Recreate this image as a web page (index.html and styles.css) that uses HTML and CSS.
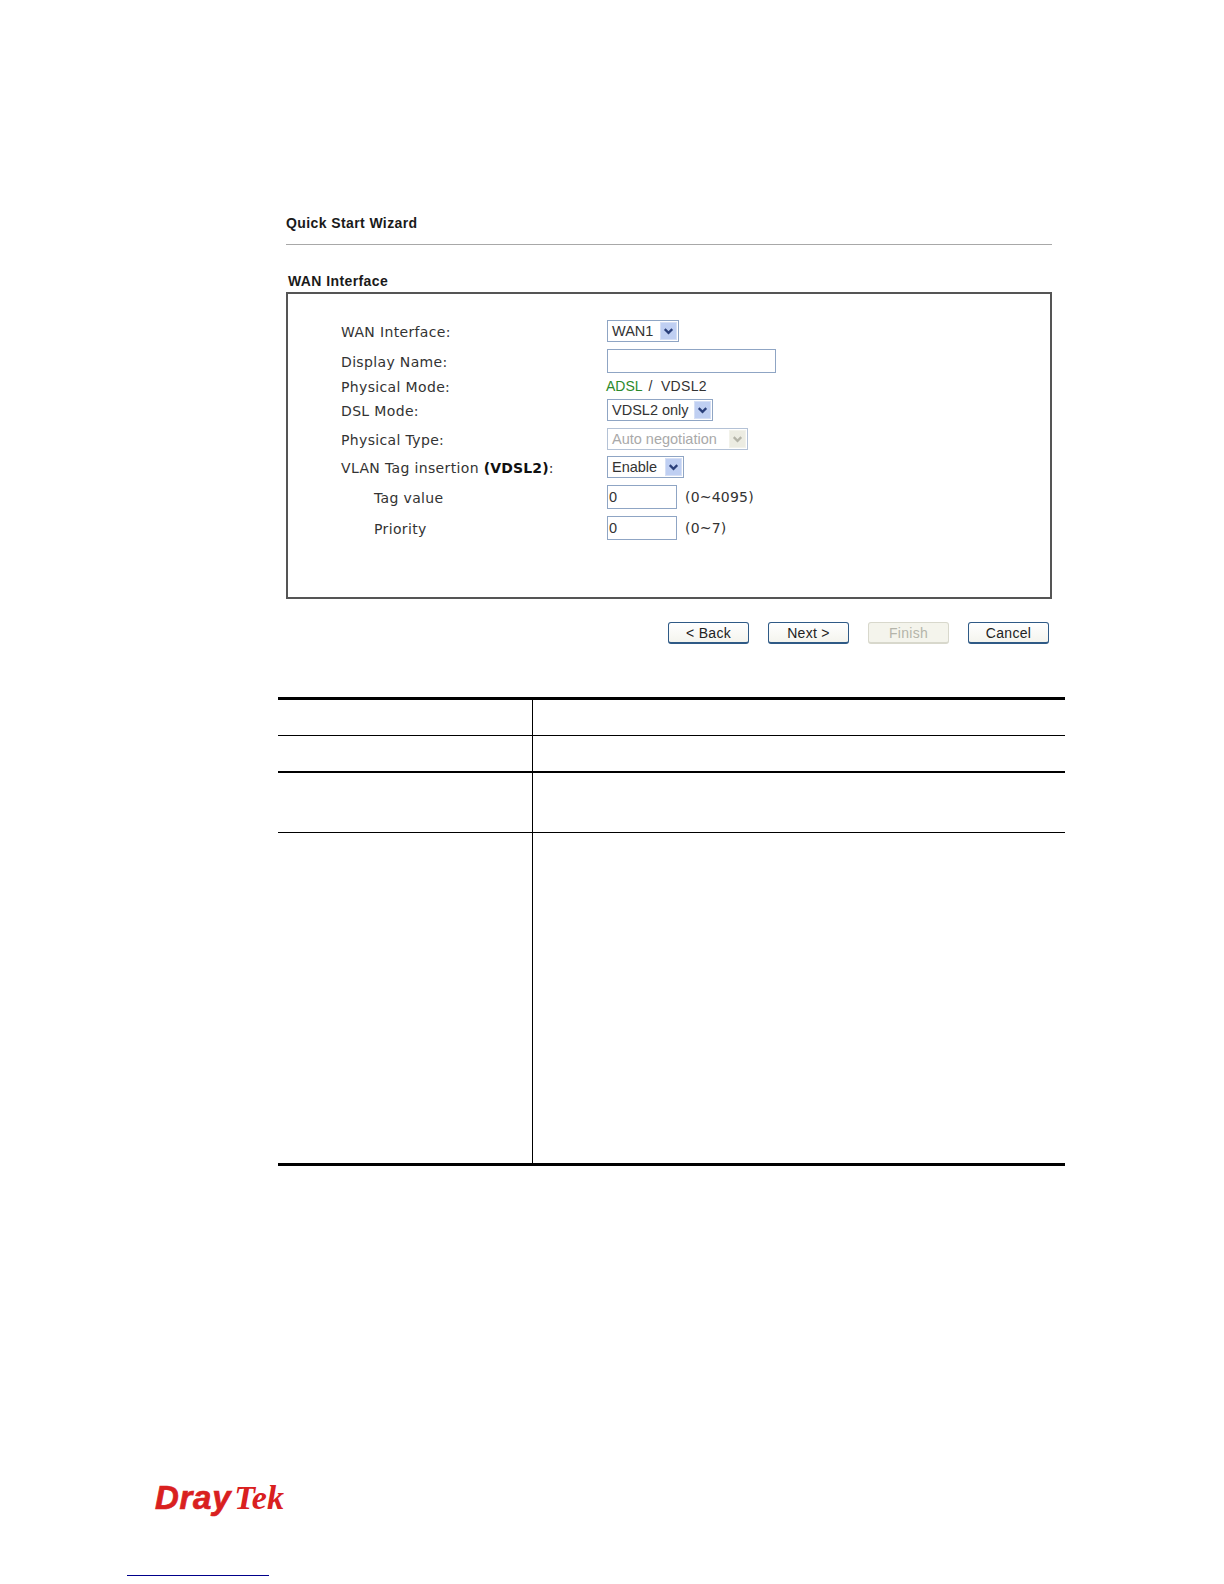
FILE: index.html
```html
<!DOCTYPE html>
<html lang="en">
<head>
<meta charset="utf-8">
<title>Quick Start Wizard</title>
<link rel="stylesheet" href="styles.css">
</head>
<body>
<main class="page">
  <section class="wizard">
    <h1 class="wizard-title">Quick Start Wizard</h1>
    <h2 class="group-title">WAN Interface</h2>
    <div class="group-box">
      <div class="form-grid">
        <div class="row row-a"><span class="label">WAN Interface:</span><div class="value"><span class="select w-wan"><span class="select-text">WAN1</span><span class="arrow"><svg viewBox="0 0 16 16"><path d="M4 6l4 4 4-4" fill="none" stroke="#2a3f7a" stroke-width="2.4"/></svg></span></span></div></div>
        <div class="row row-a"><span class="label">Display Name:</span><div class="value"><input class="input w-name" type="text"></div></div>
        <div class="row row-b"><span class="label">Physical Mode:</span><div class="value mode"><span class="adsl">ADSL</span><span class="vdsl">/ VDSL2</span></div></div>
        <div class="row row-c"><span class="label">DSL Mode:</span><div class="value"><span class="select w-dsl"><span class="select-text">VDSL2 only</span><span class="arrow"><svg viewBox="0 0 16 16"><path d="M4 6l4 4 4-4" fill="none" stroke="#2a3f7a" stroke-width="2.4"/></svg></span></span></div></div>
        <div class="row row-a"><span class="label">Physical Type:</span><div class="value"><span class="select w-type is-disabled"><span class="select-text">Auto negotiation</span><span class="arrow"><svg viewBox="0 0 16 16"><path d="M4 6l4 4 4-4" fill="none" stroke="#b4b4a8" stroke-width="2.4"/></svg></span></span></div></div>
        <div class="row row-d"><span class="label">VLAN Tag insertion <b>(VDSL2)</b>:</span><div class="value"><span class="select w-vlan"><span class="select-text">Enable</span><span class="arrow"><svg viewBox="0 0 16 16"><path d="M4 6l4 4 4-4" fill="none" stroke="#2a3f7a" stroke-width="2.4"/></svg></span></span></div></div>
        <div class="row row-e"><span class="label indent">Tag value</span><div class="value"><input class="input w-num" type="text" value="0"><span class="hint">(0~4095)</span></div></div>
        <div class="row row-c"><span class="label indent">Priority</span><div class="value"><input class="input w-num" type="text" value="0"><span class="hint">(0~7)</span></div></div>
      </div>
    </div>
    <div class="actions">
      <button class="btn" type="button">&lt; Back</button>
      <button class="btn" type="button">Next &gt;</button>
      <button class="btn" type="button" disabled>Finish</button>
      <button class="btn" type="button">Cancel</button>
    </div>
  </section>

  <table class="doc-table">
    <tbody>
      <tr class="tr-1"><td></td><td></td></tr>
      <tr class="tr-2"><td></td><td></td></tr>
      <tr class="tr-3"><td></td><td></td></tr>
      <tr class="tr-4"><td></td><td></td></tr>
    </tbody>
  </table>

  <footer class="footer">
    <div class="logo"><span class="logo-dray">Dray</span><span class="logo-tek">Tek</span></div>
    <div class="footer-rule"></div>
  </footer>
</main>
</body>
</html>
```
FILE: styles.css
```css
* { box-sizing: border-box; }
html, body { margin: 0; padding: 0; background: #fff; }
body { font-family: "Liberation Sans", Arial, sans-serif; color: #111; }
.page { width: 1224px; height: 1584px; padding-top: 214px; overflow: hidden; }

.wizard { width: 766px; margin-left: 286px; }
.wizard-title {
  margin: 0; height: 31px; line-height: 18px; letter-spacing: .4px;
  font-size: 14px; font-weight: bold; color: #1a1a1a;
  border-bottom: 1px solid #a8a8a8;
}
.group-title {
  margin: 26px 0 0; height: 21px; padding-left: 2px; line-height: 20px; letter-spacing: .4px;
  font-size: 14px; font-weight: bold; color: #1a1a1a;
}
.group-box {
  height: 307px; padding: 22px 0 0 53px;
  border: 2px solid #555;
}
.row { display: flex; align-items: center; }
.row-a { height: 30px; }
.row-b { height: 20px; }
.row-c { height: 28px; }
.row-d { height: 26px; }
.row-e { height: 34px; }
.label {
  width: 266px; flex: none; padding-top: 1px; letter-spacing: .35px;
  font-family: "DejaVu Sans", Verdana, sans-serif; font-size: 14px; color: #333;
}
.label b { color: #111; letter-spacing: .15px; }
.indent { padding-left: 33px; }
.value { display: flex; align-items: center; font-size: 14px; color: #333; }
.mode { margin-left: -1px; white-space: pre; }
.adsl { color: #2b8a2b; margin-right: 6px; }
.vdsl { letter-spacing: .3px; word-spacing: 4px; }

.select {
  display: flex; align-items: center; justify-content: space-between;
  height: 22px; padding: 1px; background: #fff;
  border: 1px solid #8fa5c4; font-size: 14.5px; color: #333;
}
.select-text { padding-left: 3px; white-space: nowrap; }
.arrow {
  width: 17px; height: 18px; flex: none; background: #bfcff2;
  border: 1px solid #d5dff5;
}
.arrow svg { display: block; width: 100%; height: 100%; }
.w-wan { width: 72px; }
.w-dsl { width: 106px; }
.w-type { width: 141px; }
.w-vlan { width: 77px; }
.is-disabled { color: #a9a9a9; border-color: #b4c2d6; }
.is-disabled .arrow { background: #ecece2; border-color: #f2f2ea; }

.input {
  display: block; height: 24px; margin: 0; padding: 0 1px;
  background: #fff; border: 1px solid #8fa5c4; border-radius: 0; outline: 0;
  font-family: "Liberation Sans", Arial, sans-serif; font-size: 14.5px; color: #333;
}
.w-name { width: 169px; height: 24px; }
.w-num { width: 70px; }
.hint {
  margin-left: 8px; letter-spacing: .2px;
  font-family: "DejaVu Sans", Verdana, sans-serif; font-size: 14px; color: #333;
}

.actions { display: flex; justify-content: flex-end; gap: 19px; margin-top: 23px; padding-right: 3px; }
.btn {
  width: 81px; height: 22px; margin: 0; padding: 0; letter-spacing: .3px;
  background: linear-gradient(#fff, #f4f4ee);
  border: 1px solid #2f5a86; border-bottom-width: 2px; border-radius: 3px;
  font-family: "Liberation Sans", Arial, sans-serif; font-size: 14px; color: #222;
}
.btn:disabled { color: #b4b4aa; background: #f4f4ec; border-color: #d8d8cc; }

.doc-table {
  width: 787px; margin: 53px 0 0 278px; table-layout: fixed;
  border-collapse: collapse;
}
.doc-table td { padding: 0; border-left: 1.5px solid #000; }
.doc-table td:first-child { width: 254px; border-left: 0; }
.tr-1 { height: 37px; border-top: 3px solid #000; }
.tr-2 { height: 36px; border-top: 1.5px solid #000; }
.tr-3 { height: 61px; border-top: 2.5px solid #000; }
.tr-4 { height: 332px; border-top: 1.5px solid #000; border-bottom: 3px solid #000; }

.footer { margin-top: 312px; margin-left: 127px; }
.logo { margin-left: 28px; height: 40px; line-height: 40px; color: #d9201f; white-space: nowrap; }
.logo-dray {
  font-family: "Liberation Sans", Arial, sans-serif; font-weight: bold; font-style: italic;
  font-size: 33px; letter-spacing: .7px; -webkit-text-stroke: .7px #d9201f;
}
.logo-tek {
  font-family: "Liberation Serif", serif; font-weight: bold; font-style: italic;
  font-size: 34px; margin-left: 3px;
}
.footer-rule { width: 142px; height: 1px; margin-top: 57px; background: #00008b; }
```
